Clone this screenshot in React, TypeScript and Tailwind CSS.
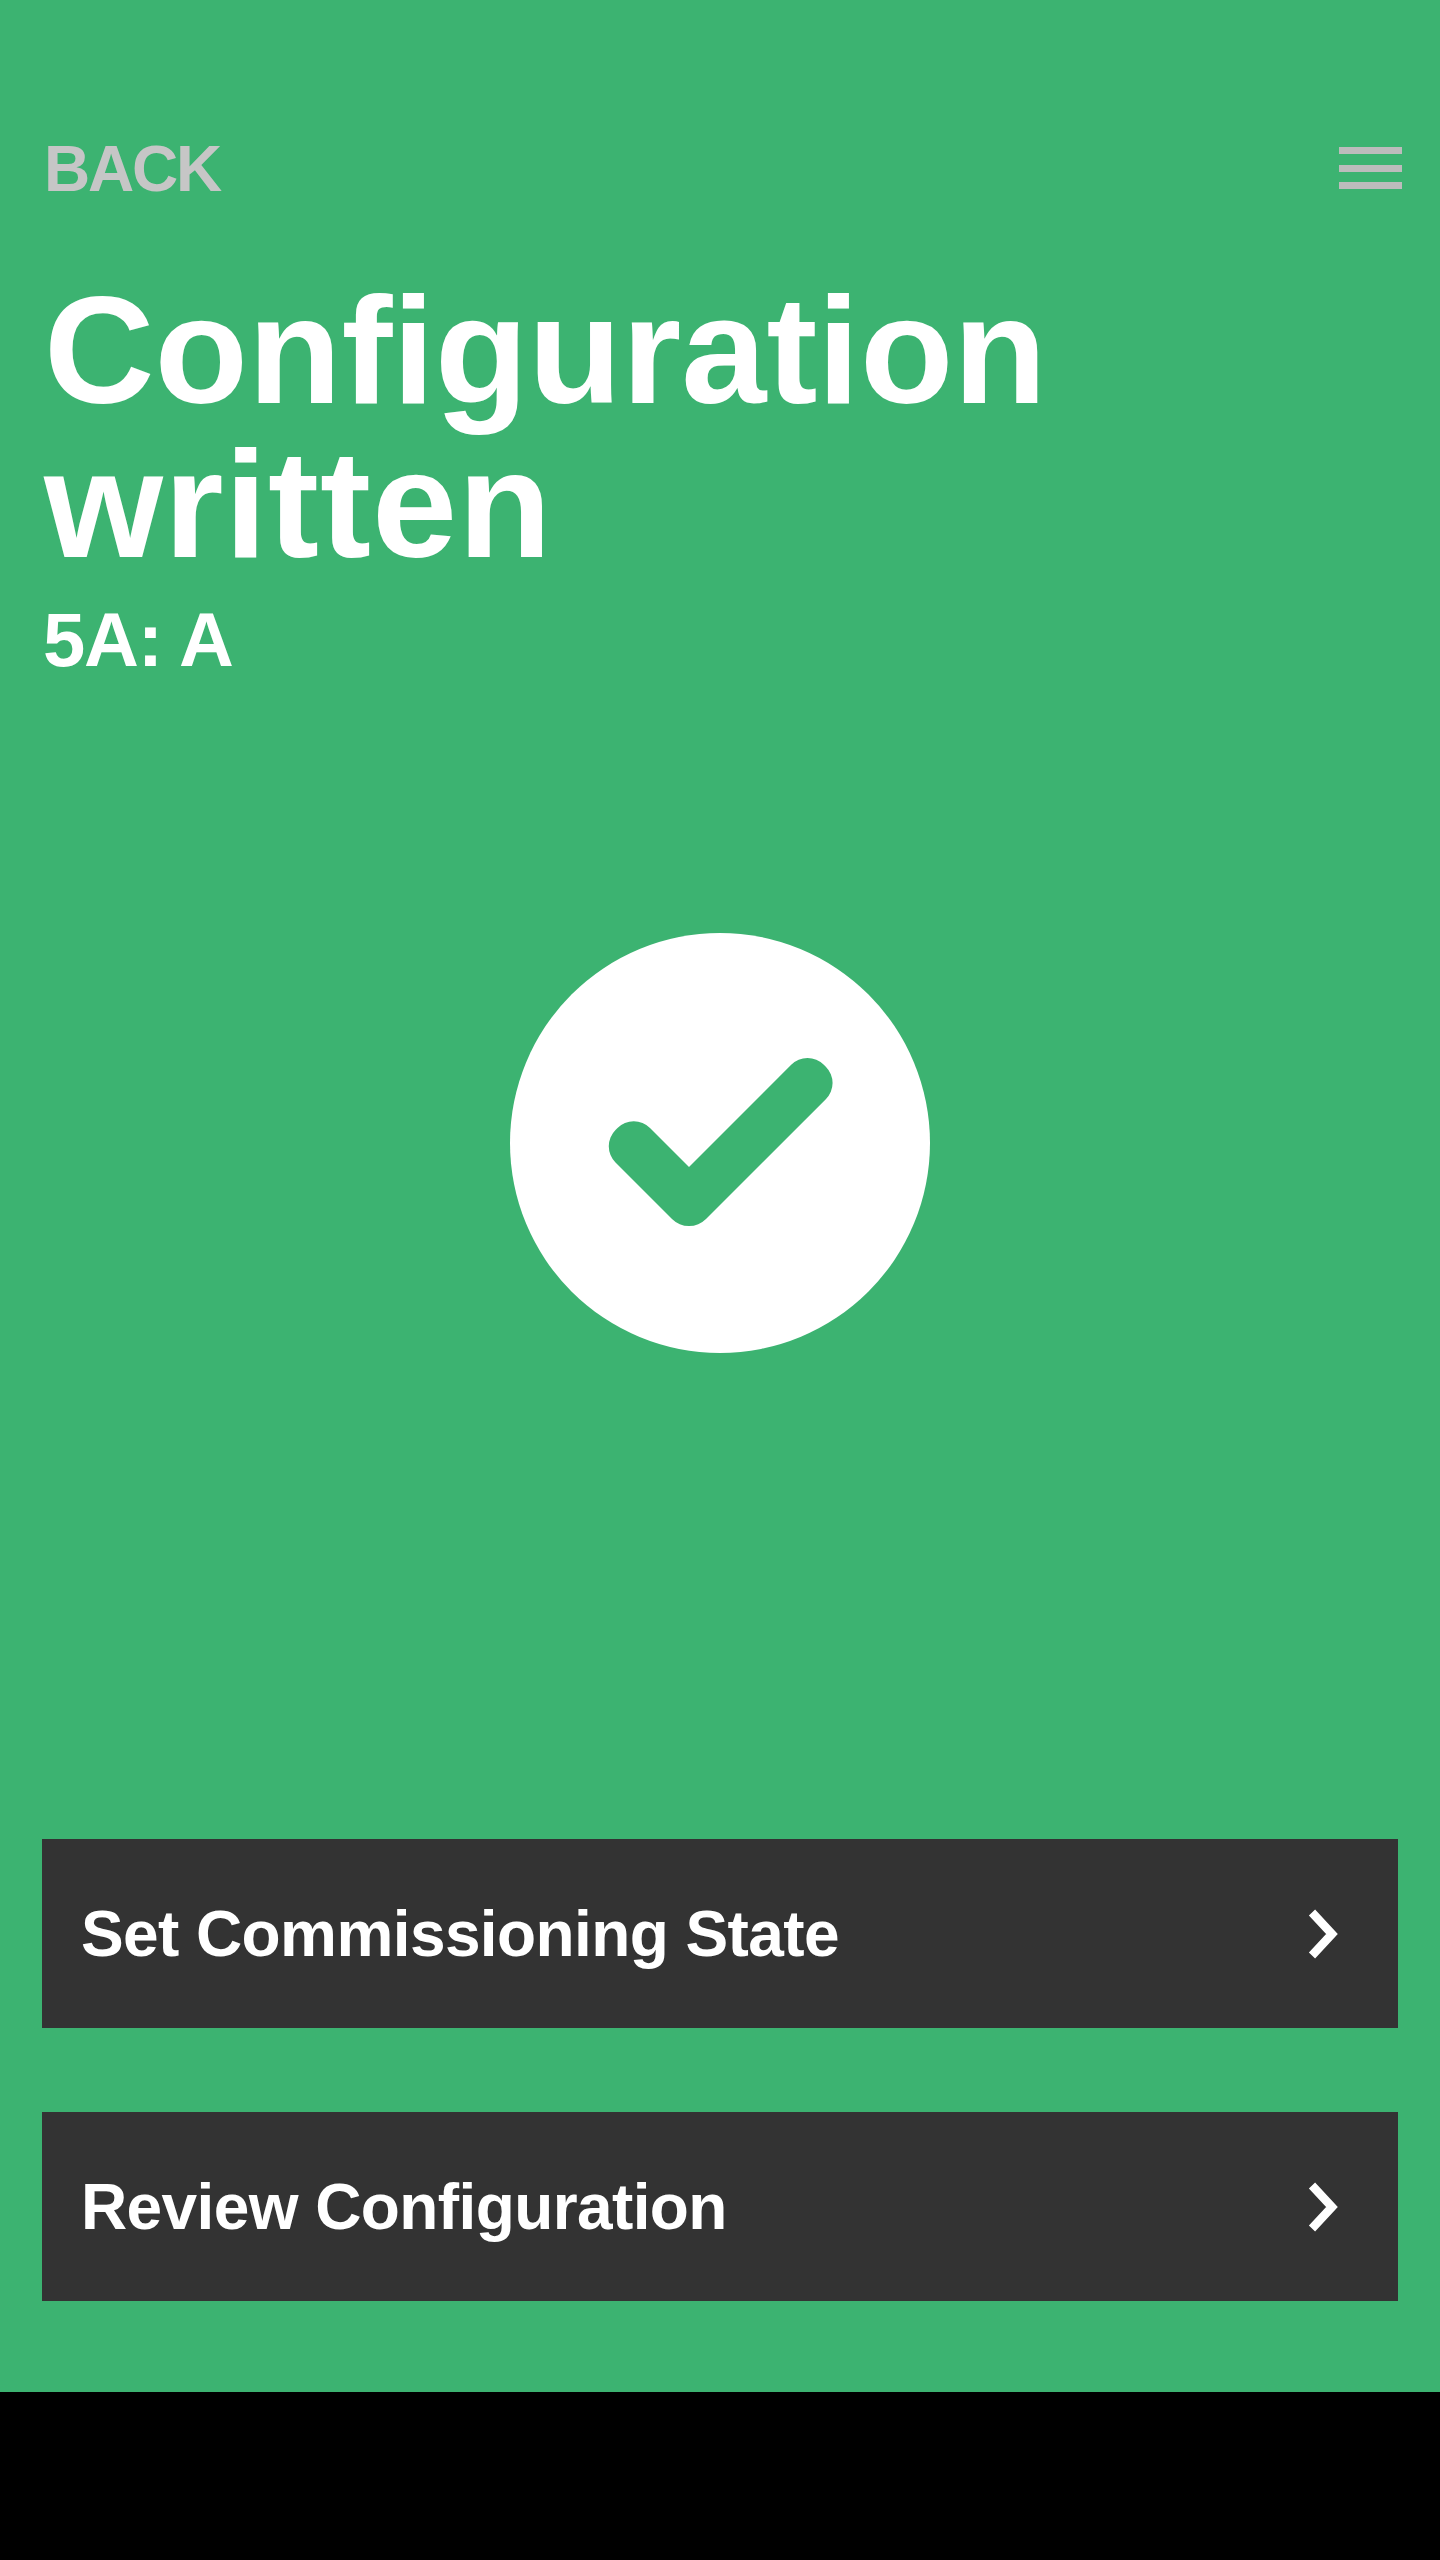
import React from 'react';

const ActionButton: React.FC<{ label: string }> = ({ label }) => (
  <button className="flex h-[189px] w-full items-center justify-between bg-[#333333] pl-[39px] pr-[60px] text-left">
    <span className="text-[64px] leading-none font-bold tracking-[-0.6px] text-white">{label}</span>
    <svg width="30" height="50" viewBox="0 0 30 50" fill="none">
      <path d="M4 3.5 L24 25 L4 46.5" stroke="#ffffff" strokeWidth="8.5" strokeLinejoin="miter" />
    </svg>
  </button>
);

const App: React.FC = () => {
  return (
    <div className="flex h-[2560px] w-[1440px] flex-col bg-black font-['Liberation_Sans',Arial,sans-serif]">
      <div className="flex h-[2392px] flex-col bg-[#3cb371] px-[42px] pb-[91px]">
        {/* Header */}
        <div className="flex items-center justify-between pt-[138px]">
          <span className="ml-[2px] text-[64px] leading-[62px] font-bold tracking-[-2.2px] text-[#c6c6c6]">BACK</span>
          <div className="-mr-1 -mt-[2px] flex flex-col gap-[10.5px]">
            <div className="h-[7px] w-[63px] bg-[#bcbcbc]" />
            <div className="h-[7px] w-[63px] bg-[#bcbcbc]" />
            <div className="h-[7px] w-[63px] bg-[#bcbcbc]" />
          </div>
        </div>

        {/* Title */}
        <h1 className="mt-[73px] ml-[2px] text-[153px] leading-[154px] font-bold text-white">
          Configuration
          <br />
          <span className="tracking-[1px]">written</span>
        </h1>
        <div className="mt-[19px] ml-[1px] text-[76px] leading-[80px] font-bold tracking-[-1.2px] text-white">5A: A</div>

        {/* Check mark */}
        <div className="mt-[253px] flex justify-center">
          <div className="h-[420px] w-[420px] rounded-full bg-white">
            <svg width="420" height="420" viewBox="0 0 420 420" fill="none">
              <path
                d="M140 195 L179 234 L281.2 131.7 A23 23 0 0 1 313.8 131.7 L315.8 133.7 A23 23 0 0 1 315.8 166.3 L196 286 A24 24 0 0 1 162 286 L105.5 229.5 A23 23 0 0 1 105.5 197 L107.5 195 A23 23 0 0 1 140 195 Z"
                fill="#3cb371"
              />
            </svg>
          </div>
        </div>

        {/* Actions */}
        <div className="mt-auto flex flex-col gap-[84px]">
          <ActionButton label="Set Commissioning State" />
          <ActionButton label="Review Configuration" />
        </div>
      </div>
    </div>
  );
};

export default App;
